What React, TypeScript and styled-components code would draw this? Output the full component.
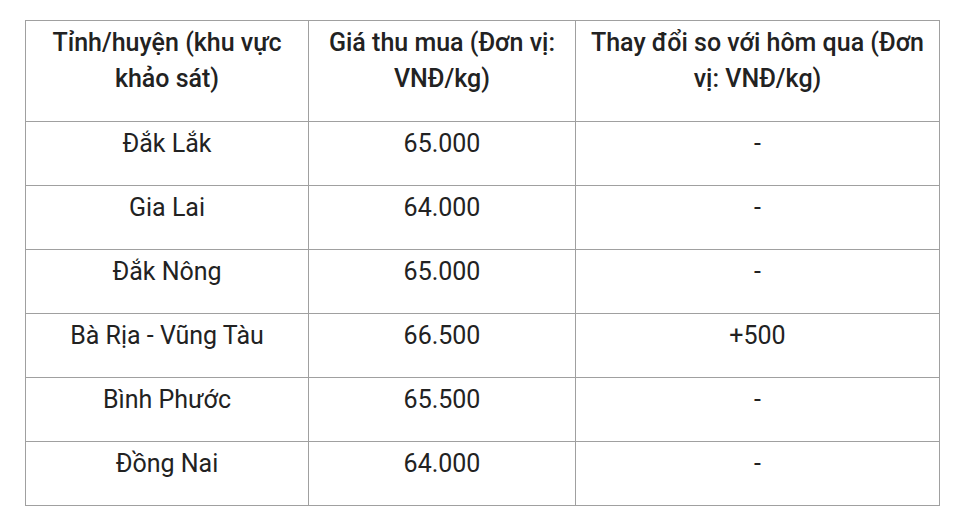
import React from "react";
import styled, { createGlobalStyle } from "styled-components";

const Global = createGlobalStyle`
  html, body { margin: 0; padding: 0; background: #ffffff; }
  body { font-family: Roboto, "Noto Sans", "Liberation Sans", sans-serif; color: #222222; }
`;

const Page = styled.div`
  padding: 20px 29px 0 25px;
`;

const Table = styled.table`
  width: 914px;
  border-collapse: collapse;
  table-layout: fixed;
`;

const HeadCell = styled.th<{ $w: number }>`
  box-sizing: border-box;
  width: ${(p) => p.$w}px;
  border: 1px solid #a0a0a0;
  padding: 4px 10px 0;
  height: 101px;
  vertical-align: top;
  text-align: center;
  font-size: 25px;
  line-height: 36px;
  font-weight: 500;
  color: #222222;
`;

const Cell = styled.td`
  box-sizing: border-box;
  border: 1px solid #a0a0a0;
  padding: 4px 10px 0;
  height: 64px;
  vertical-align: top;
  text-align: center;
  font-size: 25px;
  line-height: 36px;
  font-weight: 400;
  color: #222222;
`;

const rows: [string, string, string][] = [
  ["Đắk Lắk", "65.000", "-"],
  ["Gia Lai", "64.000", "-"],
  ["Đắk Nông", "65.000", "-"],
  ["Bà Rịa - Vũng Tàu", "66.500", "+500"],
  ["Bình Phước", "65.500", "-"],
  ["Đồng Nai", "64.000", "-"],
];

export default function App() {
  return (
    <>
      <Global />
      <Page>
        <Table>
          <thead>
            <tr>
              <HeadCell $w={283}>Tỉnh/huyện (khu vực khảo sát)</HeadCell>
              <HeadCell $w={267}>Giá thu mua (Đơn vị: VNĐ/kg)</HeadCell>
              <HeadCell $w={364}>Thay đổi so với hôm qua (Đơn vị: VNĐ/kg)</HeadCell>
            </tr>
          </thead>
          <tbody>
            {rows.map((r) => (
              <tr key={r[0]}>
                <Cell>{r[0]}</Cell>
                <Cell>{r[1]}</Cell>
                <Cell>{r[2]}</Cell>
              </tr>
            ))}
          </tbody>
        </Table>
      </Page>
    </>
  );
}
